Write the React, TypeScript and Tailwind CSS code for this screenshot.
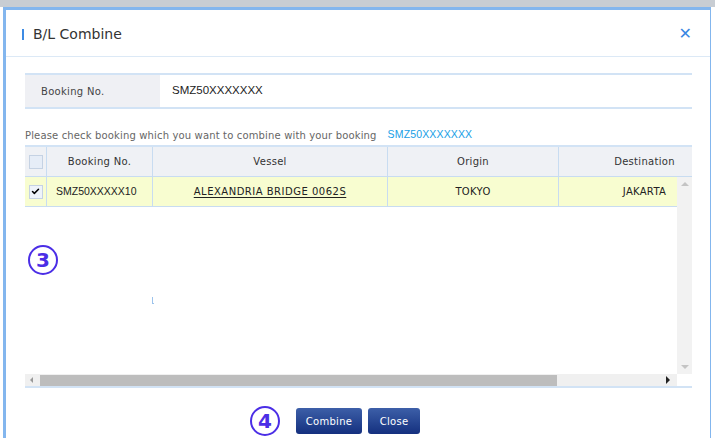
import { Check } from "lucide-react";

const rows = [
  { booking: "SMZ50XXXXX10", vessel: "ALEXANDRIA BRIDGE 0062S", origin: "TOKYO", destination: "JAKARTA" },
];

function Circled({ n }: { n: string }) {
  return (
    <span className="flex items-center justify-center w-[30px] h-[30px] rounded-full border-[2.5px] border-[#4b2ee6] text-[#4b2ee6] text-[20px] font-bold leading-none font-['DejaVu_Sans',sans-serif]">
      {n}
    </span>
  );
}

export default function App() {
  return (
    <div className="w-[715px] h-[447px] bg-white overflow-hidden font-['DejaVu_Sans',sans-serif] text-[#333]">
      <div className="h-[7px] bg-[#c8cdd3]" />
      <div className="ml-[3px] w-[708px] h-[431px] border-l-[3px] border-t-[3px] border-r border-[#83b6ee] bg-white flex flex-col">
        {/* header */}
        <div className="h-[47px] flex items-center justify-between border-b border-[#dce9f6] pl-[16px] pr-[18px] pt-[2px]">
          <div className="flex items-center gap-[9px]">
            <span className="w-[2px] h-[11px] bg-[#3d8be4]" />
            <span className="text-[14px] text-[#333]">B/L Combine</span>
          </div>
          <button className="text-[#3a86e2] text-[16px] font-bold leading-none font-['DejaVu_Sans',sans-serif]">✕</button>
        </div>

        <div className="pl-[19px] pr-[18px] pt-[16px] flex flex-col">
          {/* booking no */}
          <div className="flex h-[36px] border-t-2 border-b-2 border-[#d2e3f5]">
            <div className="w-[135px] bg-[#eff0f4] flex items-center pl-[16px] text-[10px] tracking-[0.3px] text-[#444]">Booking No.</div>
            <div className="flex items-center pl-[12px] text-[11.5px] font-['Liberation_Sans',sans-serif] text-[#222]">SMZ50XXXXXXX</div>
          </div>

          <div className="mt-[17px] h-[18px] flex items-center text-[10px] text-[#666] tracking-[0.15px]">
            Please check booking which you want to combine with your booking
            <span className="ml-[11px] text-[#18a0e6] text-[10.5px] font-['Liberation_Sans',sans-serif]">SMZ50XXXXXXX</span>
          </div>

          {/* grid */}
          <div className="mt-[1px] border-t-2 border-[#d2e3f5]">
            <div className="overflow-hidden">
              <div className="flex h-[30px] bg-[#eff1f5] border-b border-[#c8dcf1] text-[10px] text-[#333] tracking-[0.3px] w-[800px]">
                <div className="w-[22px] flex items-center justify-center border-r border-[#c8dcf1]">
                  <span className="w-[14px] h-[14px] border border-[#c5d2e3] bg-[#e6edf7]" />
                </div>
                <div className="w-[106px] flex items-center justify-center border-r border-[#c8dcf1]">Booking No.</div>
                <div className="w-[235px] flex items-center justify-center border-r border-[#c8dcf1]">Vessel</div>
                <div className="w-[171px] flex items-center justify-center border-r border-[#c8dcf1]">Origin</div>
                <div className="w-[171px] flex items-center justify-center">Destination</div>
              </div>
            </div>

            <div className="flex h-[197px]">
              <div className="flex-1 overflow-hidden">
                {rows.map((r) => (
                  <div key={r.booking} className="flex h-[30px] bg-[#f8fdd0] border-b border-[#c8dcf1] text-[10px] text-[#222] tracking-[0.3px] w-[800px]">
                    <div className="w-[22px] flex items-center justify-center border-r border-[#c8dcf1]">
                      <span className="w-[14px] h-[14px] border border-[#c5d2e3] bg-[#eef3fa] flex items-center justify-center">
                        <Check className="w-[9px] h-[9px] text-black" strokeWidth={4} />
                      </span>
                    </div>
                    <div className="w-[106px] flex items-center pl-[9px] border-r border-[#c8dcf1] text-[10.5px] tracking-normal font-['Liberation_Sans',sans-serif]">{r.booking}</div>
                    <div className="w-[235px] flex items-center justify-center border-r border-[#c8dcf1] underline underline-offset-2 tracking-[0.5px]">{r.vessel}</div>
                    <div className="w-[171px] flex items-center justify-center border-r border-[#c8dcf1]">{r.origin}</div>
                    <div className="w-[171px] flex items-center justify-center">{r.destination}</div>
                  </div>
                ))}
                <div className="pl-[3px] pt-[38px]">
                  <Circled n="3" />
                </div>
                <div className="ml-[127px] mt-[22px] w-[2px] h-[7px] border-l border-b border-[#9cc3ec]" />
              </div>
              {/* vertical scrollbar */}
              <div className="w-[15px] bg-[#f2f2f2] flex flex-col items-center justify-between py-[5px]">
                <span className="w-0 h-0 border-l-[4px] border-r-[4px] border-b-[4px] border-l-transparent border-r-transparent border-b-[#c4c4c4]" />
                <span className="w-0 h-0 border-l-[4px] border-r-[4px] border-t-[4px] border-l-transparent border-r-transparent border-t-[#c4c4c4]" />
              </div>
            </div>

            {/* horizontal scrollbar */}
            <div className="flex h-[14px] border-b-2 border-[#d2e3f5]">
              <div className="flex-1 bg-[#f0f0f0] flex items-center">
                <span className="ml-[5px] w-0 h-0 border-t-[3px] border-b-[3px] border-r-[3px] border-t-transparent border-b-transparent border-r-[#999]" />
                <span className="ml-[7px] w-[517px] h-[11px] bg-[#bdbdbd]" />
                <span className="ml-auto mr-[7px] w-0 h-0 border-t-[4px] border-b-[4px] border-l-[4px] border-t-transparent border-b-transparent border-l-[#222]" />
              </div>
              <div className="w-[15px] bg-white" />
            </div>
          </div>

          {/* buttons */}
          <div className="mt-[18px] flex items-center gap-[6px] pl-[225px]">
            <span className="mr-[10px]"><Circled n="4" /></span>
            <button className="h-[26px] w-[66px] rounded-[3px] bg-gradient-to-b from-[#3d5fa8] to-[#15307f] text-white text-[10px] tracking-[0.3px]">Combine</button>
            <button className="h-[26px] w-[52px] rounded-[3px] bg-gradient-to-b from-[#3d5fa8] to-[#15307f] text-white text-[10px] tracking-[0.3px]">Close</button>
          </div>
        </div>
      </div>
    </div>
  );
}
